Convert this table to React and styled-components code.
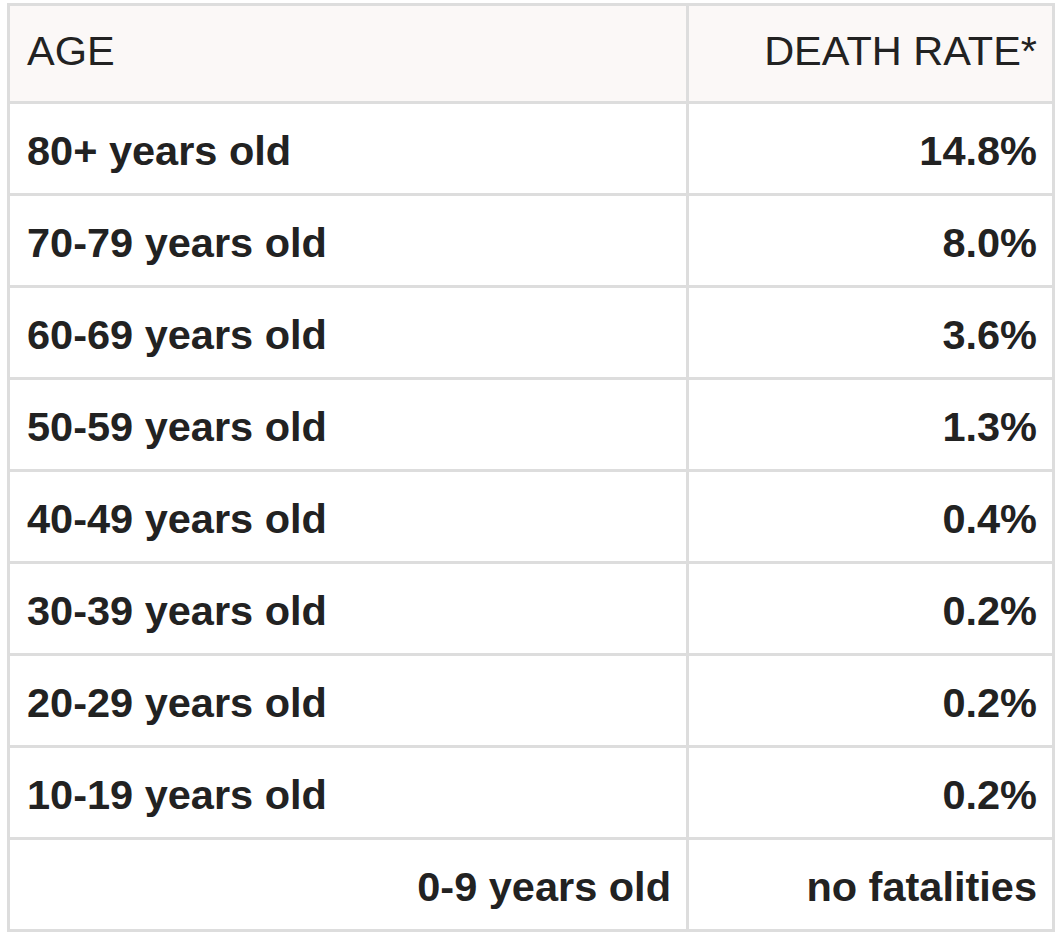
import React from 'react';
import styled, { createGlobalStyle } from 'styled-components';

const GlobalStyle = createGlobalStyle`
  html, body {
    margin: 0;
    padding: 0;
    background: #ffffff;
  }
  body {
    font-family: "Liberation Sans", Arial, Helvetica, sans-serif;
    color: #222222;
  }
`;

const Page = styled.div`
  padding: 3px 0 0 7px;
`;

// grey background + gaps act as the cell borders
const Table = styled.div`
  display: grid;
  grid-template-columns: 676px 363px;
  grid-template-rows: 95px;
  grid-auto-rows: 89px;
  gap: 3px;
  width: 1042px;
  padding: 3px;
  background: #dddddd;
`;

const Cell = styled.div`
  display: flex;
  align-items: center;
  justify-content: ${(p) => (p.$right ? 'flex-end' : 'flex-start')};
  padding: ${(p) => (p.$head ? '0 15px 5px 17px' : '5px 15px 0 17px')};
  background: ${(p) => (p.$head ? '#fbf8f7' : '#ffffff')};
  font-size: 41.5px;
  font-weight: ${(p) => (p.$head ? 400 : 700)};
  color: #222222;
  white-space: nowrap;
`;

const rows = [
  ['80+ years old', '14.8%'],
  ['70-79 years old', '8.0%'],
  ['60-69 years old', '3.6%'],
  ['50-59 years old', '1.3%'],
  ['40-49 years old', '0.4%'],
  ['30-39 years old', '0.2%'],
  ['20-29 years old', '0.2%'],
  ['10-19 years old', '0.2%'],
];

const App = () => (
  <>
    <GlobalStyle />
    <Page>
      <Table>
        <Cell $head>AGE</Cell>
        <Cell $head $right>DEATH RATE*</Cell>
        {rows.map(([age, rate]) => (
          <React.Fragment key={age}>
            <Cell>{age}</Cell>
            <Cell $right>{rate}</Cell>
          </React.Fragment>
        ))}
        <Cell $right>0-9 years old</Cell>
        <Cell $right>no fatalities</Cell>
      </Table>
    </Page>
  </>
);

export default App;
